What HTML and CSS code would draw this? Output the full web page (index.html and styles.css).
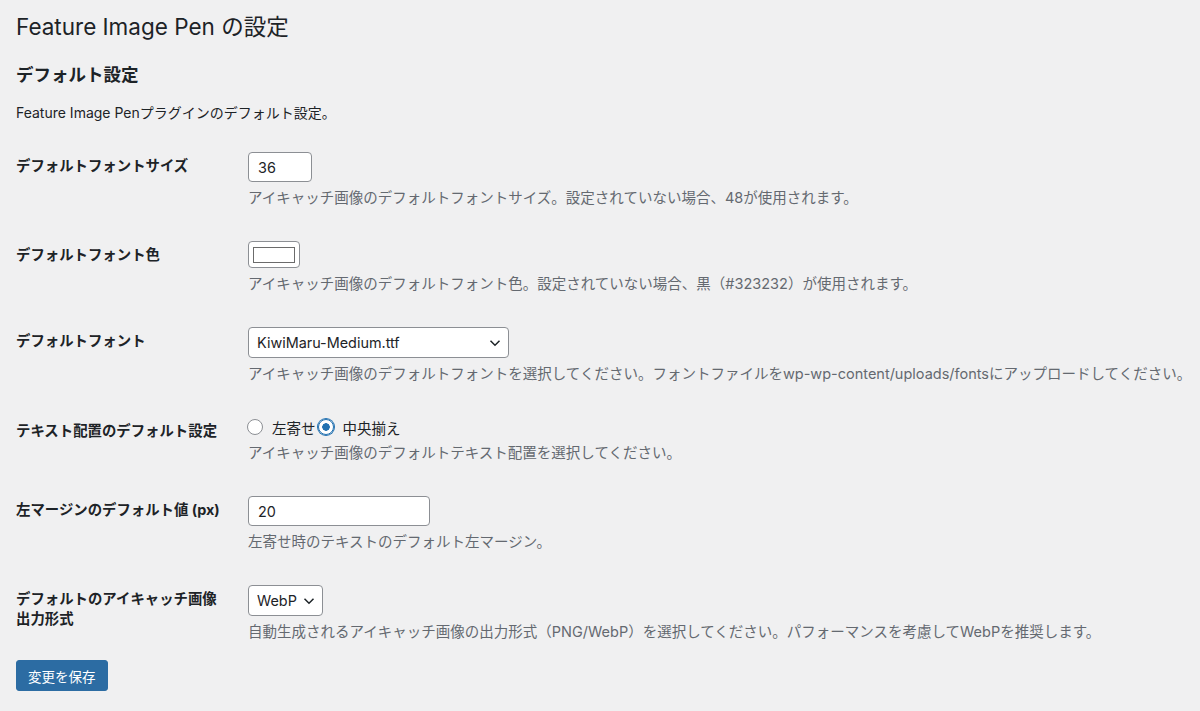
FILE: index.html
```html
<!DOCTYPE html>
<html lang="ja">
<head>
    <meta charset="UTF-8">
    <meta name="viewport" content="width=device-width, initial-scale=1.0">
    <title>Feature Image Pen の設定</title>
    <link rel="stylesheet" href="styles.css">
</head>
<body>
    <div class="wrap">
        <h1>Feature Image Pen の設定</h1>

        <form onsubmit="event.preventDefault();">
            <h2>デフォルト設定</h2>
            <p class="intro">Feature Image Penプラグインのデフォルト設定。</p>

            <div class="form-table">
                <!-- フォントサイズ -->
                <div class="form-row">
                    <label class="form-label" for="font_size">デフォルトフォントサイズ</label>
                    <div class="form-field">
                        <input type="text" id="font_size" class="input-small" value="36">
                        <p class="description">アイキャッチ画像のデフォルトフォントサイズ。設定されていない場合、48が使用されます。</p>
                    </div>
                </div>

                <!-- フォント色 -->
                <div class="form-row">
                    <label class="form-label">デフォルトフォント色</label>
                    <div class="form-field">
                        <span class="color-pick"><span class="color-swatch"></span></span>
                        <p class="description">アイキャッチ画像のデフォルトフォント色。設定されていない場合、黒（#323232）が使用されます。</p>
                    </div>
                </div>

                <!-- フォント -->
                <div class="form-row">
                    <label class="form-label" for="font_file">デフォルトフォント</label>
                    <div class="form-field">
                        <span class="select-box select-wide">
                            <select id="font_file">
                                <option>KiwiMaru-Medium.ttf</option>
                            </select>
                            <svg class="chevron" width="12" height="8" viewBox="0 0 12 8"><path d="M1.5 1.8 6 6.2 10.5 1.8" fill="none" stroke="#1d2327" stroke-width="1.5"/></svg>
                        </span>
                        <p class="description">アイキャッチ画像のデフォルトフォントを選択してください。フォントファイルをwp-wp-content/uploads/fontsにアップロードしてください。</p>
                    </div>
                </div>

                <!-- テキスト配置 -->
                <div class="form-row">
                    <div class="form-label">テキスト配置のデフォルト設定</div>
                    <div class="form-field">
                        <div class="radio-line">
                            <label><input type="radio" name="align" value="left"> 左寄せ</label>
                            <label><input type="radio" name="align" value="center" checked> 中央揃え</label>
                        </div>
                        <p class="description">アイキャッチ画像のデフォルトテキスト配置を選択してください。</p>
                    </div>
                </div>

                <!-- 左マージン -->
                <div class="form-row">
                    <label class="form-label" for="margin_left">左マージンのデフォルト値 (px)</label>
                    <div class="form-field">
                        <input type="text" id="margin_left" class="input-regular" value="20">
                        <p class="description">左寄せ時のテキストのデフォルト左マージン。</p>
                    </div>
                </div>

                <!-- 出力形式 -->
                <div class="form-row">
                    <label class="form-label" for="format">デフォルトのアイキャッチ画像出力形式</label>
                    <div class="form-field">
                        <span class="select-box select-narrow">
                            <select id="format">
                                <option>WebP</option>
                                <option>PNG</option>
                            </select>
                            <svg class="chevron" width="12" height="8" viewBox="0 0 12 8"><path d="M1.5 1.8 6 6.2 10.5 1.8" fill="none" stroke="#1d2327" stroke-width="1.5"/></svg>
                        </span>
                        <p class="description">自動生成されるアイキャッチ画像の出力形式（PNG/WebP）を選択してください。パフォーマンスを考慮してWebPを推奨します。</p>
                    </div>
                </div>
            </div>

            <p class="submit">
                <button type="submit" class="button-primary">変更を保存</button>
            </p>
        </form>
    </div>
</body>
</html>
```

FILE: styles.css
```css
/* Global Styles */
body {
    font-family: "Inter", "Noto Sans CJK JP", sans-serif;
    background-color: #f0f0f1;
    margin: 0;
    padding: 0;
    color: #1d2327;
    font-size: 14px;
}

.wrap {
    padding: 0 0 0 16px;
}

h1 {
    font-size: 22.5px;
    font-weight: 400;
    line-height: 32px;
    margin: 11px 0 0;
}

h2 {
    font-size: 17.5px;
    font-weight: 700;
    line-height: 24px;
    margin: 20px 0 0;
}

.intro {
    font-size: 14px;
    line-height: 20px;
    margin: 16px 0 0;
}

/* Form table */
.form-table {
    margin-top: 14px;
}

.form-row {
    display: flex;
}

.form-label {
    flex: none;
    width: 210px;
    padding: 19px 22px 0 0;
    font-size: 14.4px;
    font-weight: 700;
    line-height: 20px;
}

.form-field {
    flex: 1;
    padding: 15px 0 17px;
    font-size: 14.5px;
}

.description {
    margin: 5px 0 0;
    font-size: 14.5px;
    line-height: 22px;
    color: #646970;
    white-space: nowrap;
}

input[type="text"], select {
    font-family: inherit;
    font-size: 14.4px;
    color: #1d2327;
    background-color: #fff;
    border: 1px solid #8c8f94;
    border-radius: 4px;
    box-sizing: border-box;
    height: 30px;
    margin: 0;
    outline: none;
}

input[type="text"] {
    display: block;
    padding: 0 9px;
}

.input-small {
    width: 64px;
}

.input-regular {
    width: 182px;
}

.select-box {
    position: relative;
    display: block;
}

select {
    -webkit-appearance: none;
    appearance: none;
    display: block;
    height: 31px;
    padding: 0 20px 0 8px;
}

.select-wide select {
    width: 261px;
}

.select-narrow select {
    width: 75px;
}

.chevron {
    position: absolute;
    top: 12px;
    pointer-events: none;
}

.select-wide .chevron {
    left: 241px;
}

.select-narrow .chevron {
    left: 55px;
}

/* Color picker */
.color-pick {
    display: block;
    width: 52px;
    height: 27px;
    box-sizing: border-box;
    border: 1px solid #8c8f94;
    border-radius: 4px;
    background-color: #fff;
    padding: 5px 4px;
}

.color-swatch {
    display: block;
    height: 16px;
    box-sizing: border-box;
    border: 1px solid #6b6b6b;
    background-color: #fff;
}

/* Radio */
.radio-line {
    display: flex;
    align-items: center;
    height: 20px;
}

.radio-line label {
    display: flex;
    align-items: center;
    gap: 9px;
    margin-right: 3px;
}

input[type="radio"] {
    -webkit-appearance: none;
    appearance: none;
    width: 16px;
    height: 16px;
    margin: 0 0 0 -1px;
    border: 1px solid #8c8f94;
    border-radius: 50%;
    background-color: #fff;
    box-sizing: border-box;
}

input[type="radio"]:checked {
    border-color: #2271b1;
    background: radial-gradient(circle, #2271b1 0 3.5px, #fff 4px);
    box-shadow: 0 0 0 1px #2271b1;
}

/* Submit */
.submit {
    margin: 0;
}

.button-primary {
    font-family: inherit;
    font-size: 13.5px;
    color: #fff;
    background-color: #2c6ca3;
    border: 1px solid #2c6ca3;
    border-radius: 3px;
    height: 31px;
    padding: 0 11px;
    cursor: pointer;
}

.button-primary:hover {
    background-color: #135e96;
}
```
